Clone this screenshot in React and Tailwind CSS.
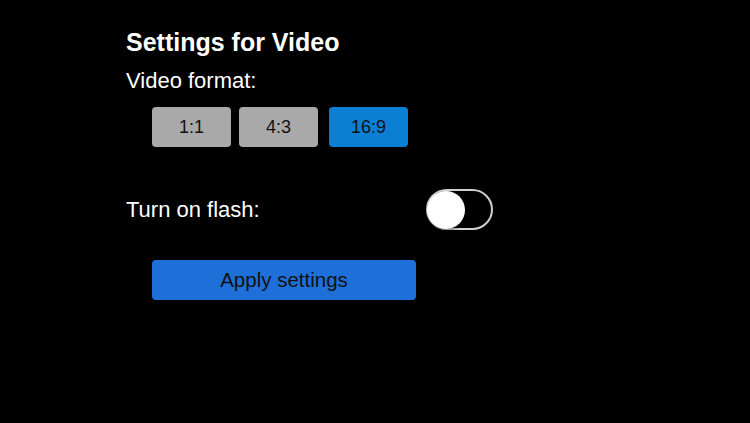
import React from 'react';

const formats = ['1:1', '4:3', '16:9'];

const App = () => {
    const active = '16:9';

    return (
        <div className="w-[750px] h-[423px] bg-black overflow-hidden font-['Liberation_Sans',Arial,sans-serif]">
            <div className="pl-[126px] pt-[28px]">
                <h1 className="text-[25px] leading-[28px] font-bold text-white">Settings for Video</h1>
                <p className="mt-[12px] text-[22px] leading-[26px] text-white">Video format:</p>

                <div className="flex mt-[13px] ml-[26px]">
                    {formats.map((f, i) => (
                        <button
                            key={f}
                            className={`w-[79px] h-[40px] rounded-[4px] text-[18px] text-[#111] ${
                                f === active ? 'bg-[#0a7fd4]' : 'bg-[#a9a9a9]'
                            } ${i === 1 ? 'ml-[8px]' : ''} ${i === 2 ? 'ml-[11px]' : ''}`}
                        >
                            {f}
                        </button>
                    ))}
                </div>

                <div className="flex items-center mt-[42px] w-[367px] justify-between">
                    <span className="text-[22px] leading-[26px] text-white">Turn on flash:</span>
                    <div className="w-[67px] h-[41px] rounded-full border-2 border-[#d0d0d0] flex items-center">
                        <div className="w-[38px] h-[38px] rounded-full bg-white -ml-[1px] shadow-[0_2px_3px_rgba(0,0,0,0.35)]" />
                    </div>
                </div>

                <button className="mt-[30px] ml-[26px] w-[264px] h-[40px] rounded-[4px] bg-[#1f6fd8] text-[20.5px] text-[#111]">
                    Apply settings
                </button>
            </div>
        </div>
    );
};

export default App;
